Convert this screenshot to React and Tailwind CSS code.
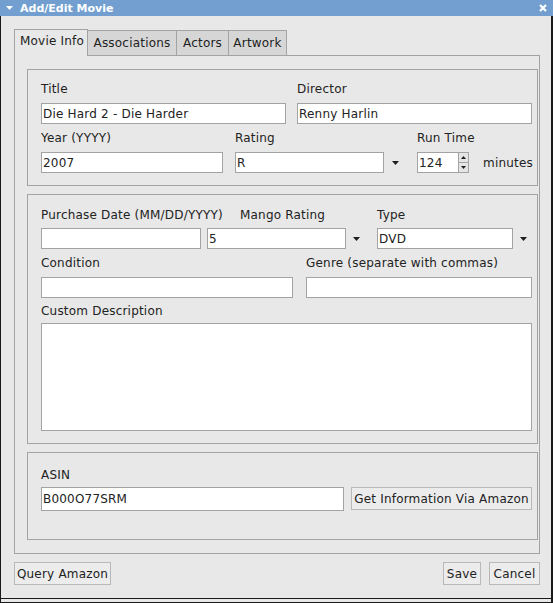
import React from 'react';

const border = 'border-[#a3a3a3]';

function Label({ children, className = '' }) {
  return <div className={`h-[14px] leading-[14px] text-[12px] text-[#222] whitespace-nowrap ${className}`}>{children}</div>;
}

function Box({ className = '', children }) {
  return (
    <div className={`flex items-center bg-white border ${border} pl-[1px] text-[12px] leading-[14px] text-[#222] whitespace-nowrap ${className}`}>
      {children}
    </div>
  );
}

function Arrow() {
  return (
    <svg width="7" height="4" viewBox="0 0 7 4">
      <path d="M0 0H7L3.5 4Z" fill="#1e1e1e" />
    </svg>
  );
}

function Button({ className = '', children }) {
  return (
    <div className={`flex items-center justify-center bg-[#ececec] border border-[#b8b8b8] text-[12px] leading-[14px] text-[#222] whitespace-nowrap ${className}`}>
      {children}
    </div>
  );
}

function Spinner() {
  return (
    <div className={`flex w-[52px] h-[21px] bg-white border ${border}`}>
      <div className="flex-1 flex items-center pl-[1px] text-[12px] leading-[14px] text-[#222]">124</div>
      <div className={`w-[10px] flex flex-col border-l ${border} bg-[#e4e4e4]`}>
        <div className={`flex-1 flex items-center justify-center border-b ${border}`}>
          <svg width="5" height="3" viewBox="0 0 5 3"><path d="M0 3H5L2.5 0Z" fill="#1e1e1e" /></svg>
        </div>
        <div className="flex-1 flex items-center justify-center">
          <svg width="5" height="3" viewBox="0 0 5 3"><path d="M0 0H5L2.5 3Z" fill="#1e1e1e" /></svg>
        </div>
      </div>
    </div>
  );
}

export default function App() {
  return (
    <div className="w-[553px] h-[603px] bg-[#e8e8e8] flex flex-col font-['DejaVu_Sans',sans-serif] tracking-[0.2px]">
      {/* title bar */}
      <div className="h-[16px] bg-[#729fcf] flex items-center pl-[6px] pr-[6px]">
        <svg width="7" height="4" viewBox="0 0 7 4" className="mr-[7px]">
          <path d="M0 0H7L3.5 4Z" fill="#ffffff" />
        </svg>
        <div className="text-white font-bold text-[11px] leading-[13px] tracking-normal">Add/Edit Movie</div>
        <div className="flex-1" />
        <svg width="8" height="8" viewBox="0 0 8 8">
          <path d="M1 1L7 7M7 1L1 7" stroke="#ffffff" strokeWidth="2.2" />
        </svg>
      </div>

      {/* body */}
      <div className="h-[583px] flex flex-col border-l border-r-2 border-b border-[#1a1a1a] pl-[13px] pr-[11px] pt-[13px]">
        {/* tabs */}
        <div className="flex items-end h-[27px]">
          <div className={`w-[74px] h-[27px] border-t border-x ${border} pt-[4px] pl-[5px] text-[12px] leading-[14px] text-[#222]`}>
            Movie Info
          </div>
          <div className={`w-[89px] h-[26px] border-t border-r border-b ${border} bg-[#d6d6d6] pt-[5px] text-center text-[12px] leading-[14px] text-[#222]`}>
            Associations
          </div>
          <div className={`w-[52px] h-[26px] border-t border-r border-b ${border} bg-[#d6d6d6] pt-[5px] text-center text-[12px] leading-[14px] text-[#222]`}>
            Actors
          </div>
          <div className={`w-[58px] h-[26px] border-t border-r border-b ${border} bg-[#d6d6d6] pt-[5px] text-center text-[12px] leading-[14px] text-[#222]`}>
            Artwork
          </div>
          <div className={`flex-1 h-[1px] border-b ${border}`} />
        </div>

        {/* tab pane */}
        <div className={`h-[498px] border-x border-b ${border} pt-[13px] pl-[12px] pr-[1px] flex flex-col gap-[8px]`}>
          {/* panel 1 */}
          <div className={`h-[117px] border ${border} pt-[12px] pl-[13px] flex flex-col gap-[7px]`}>
            <div className="flex">
              <div className="w-[256px] flex flex-col gap-[7px]">
                <Label>Title</Label>
                <Box className="w-[245px] h-[21px]">Die Hard 2 - Die Harder</Box>
              </div>
              <div className="flex flex-col gap-[7px]">
                <Label>Director</Label>
                <Box className="w-[235px] h-[21px]">Renny Harlin</Box>
              </div>
            </div>
            <div className="flex">
              <div className="w-[194px] flex flex-col gap-[7px]">
                <Label>Year (YYYY)</Label>
                <Box className="w-[182px] h-[21px]">2007</Box>
              </div>
              <div className="w-[182px] flex flex-col gap-[7px]">
                <Label>Rating</Label>
                <div className="flex items-center h-[21px]">
                  <Box className="w-[149px] h-[21px]">R</Box>
                  <div className="pl-[8px] flex items-center"><Arrow /></div>
                </div>
              </div>
              <div className="flex flex-col gap-[7px]">
                <Label>Run Time</Label>
                <div className="flex items-center h-[21px]">
                  <Spinner />
                  <div className="ml-[14px] text-[12px] leading-[14px] text-[#222]">minutes</div>
                </div>
              </div>
            </div>
          </div>

          {/* panel 2 */}
          <div className={`h-[250px] border ${border} pt-[13px] pl-[13px] flex flex-col`}>
            <div className="flex">
              <Label className="w-[199px]">Purchase Date (MM/DD/YYYY)</Label>
              <Label className="w-[137px]">Mango Rating</Label>
              <Label>Type</Label>
            </div>
            <div className="flex items-center mt-[6px] h-[21px]">
              <Box className="w-[160px] h-[21px]" />
              <Box className="w-[139px] h-[21px] ml-[6px]">5</Box>
              <div className="w-[31px] pl-[7px] flex items-center"><Arrow /></div>
              <Box className="w-[136px] h-[21px]">DVD</Box>
              <div className="pl-[7px] flex items-center"><Arrow /></div>
            </div>
            <div className="flex mt-[7px]">
              <Label className="w-[265px]">Condition</Label>
              <Label>Genre (separate with commas)</Label>
            </div>
            <div className="flex mt-[7px]">
              <Box className="w-[252px] h-[21px]" />
              <Box className="w-[226px] h-[21px] ml-[13px]" />
            </div>
            <Label className="mt-[6px]">Custom Description</Label>
            <div className={`mt-[5px] w-[491px] h-[108px] bg-white border ${border}`} />
          </div>

          {/* panel 3 */}
          <div className={`h-[88px] border ${border} pt-[15px] pl-[13px] flex flex-col`}>
            <Label>ASIN</Label>
            <div className="flex items-start mt-[5px]">
              <Box className="w-[303px] h-[24px]">B000O77SRM</Box>
              <Button className="w-[181px] h-[23px] ml-[7px]">Get Information Via Amazon</Button>
            </div>
          </div>
        </div>

        {/* bottom buttons */}
        <div className="flex justify-between mt-[8px]">
          <Button className="w-[97px] h-[23px]">Query Amazon</Button>
          <div className="flex gap-[8px]">
            <Button className="w-[38px] h-[23px]">Save</Button>
            <Button className="w-[51px] h-[23px]">Cancel</Button>
          </div>
        </div>
      </div>
      <div className="h-[4px] border-l border-r-2 border-b border-[#1a1a1a]" />
    </div>
  );
}
